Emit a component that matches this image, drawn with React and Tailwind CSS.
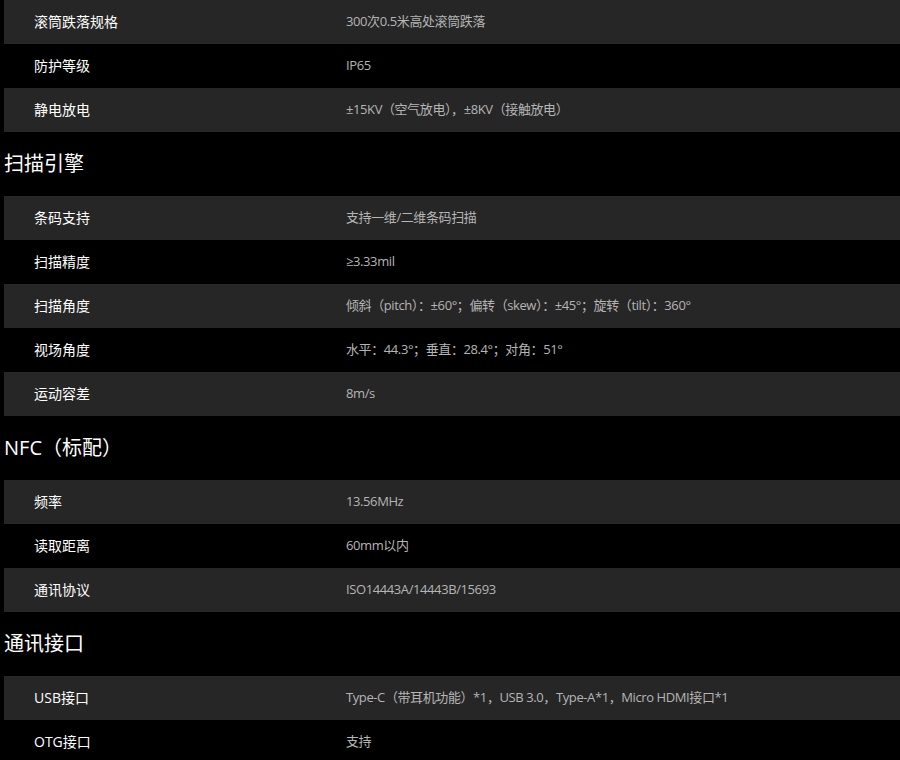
import React from 'react';

const sections = [
  {
    title: null,
    rows: [
      ['滚筒跌落规格', '300次0.5米高处滚筒跌落'],
      ['防护等级', 'IP65'],
      ['静电放电', '±15KV（空气放电），±8KV（接触放电）'],
    ],
  },
  {
    title: '扫描引擎',
    rows: [
      ['条码支持', '支持一维/二维条码扫描'],
      ['扫描精度', '≥3.33mil'],
      ['扫描角度', '倾斜（pitch）：±60°；偏转（skew）：±45°；旋转（tilt）：360°'],
      ['视场角度', '水平：44.3°；垂直：28.4°；对角：51°'],
      ['运动容差', '8m/s'],
    ],
  },
  {
    title: 'NFC（标配）',
    rows: [
      ['频率', '13.56MHz'],
      ['读取距离', '60mm以内'],
      ['通讯协议', 'ISO14443A/14443B/15693'],
    ],
  },
  {
    title: '通讯接口',
    rows: [
      ['USB接口', 'Type-C（带耳机功能）*1，USB 3.0，Type-A*1，Micro HDMI接口*1'],
      ['OTG接口', '支持'],
    ],
  },
];

export default function App() {
  return (
    <main
      className="min-h-screen bg-black pl-1 overflow-hidden"
      style={{ fontFamily: '"Open Sans", "Noto Sans CJK SC", sans-serif' }}
    >
      {sections.map((section, i) => (
        <section key={i}>
          {section.title && (
            <h2 className="h-16 flex items-center pb-px text-[20px] text-white font-normal">
              {section.title}
            </h2>
          )}
          {section.rows.map(([label, value], j) => (
            <div
              key={label}
              className={`h-11 flex items-center pb-px ${j % 2 === 0 ? 'bg-[#262626]' : 'bg-black'}`}
            >
              <div className="w-[342px] shrink-0 pl-[30px] text-[14px] text-white">{label}</div>
              <div className="text-[13px] tracking-[-0.4px] text-[#b5b5b5]">{value}</div>
            </div>
          ))}
        </section>
      ))}
    </main>
  );
}
